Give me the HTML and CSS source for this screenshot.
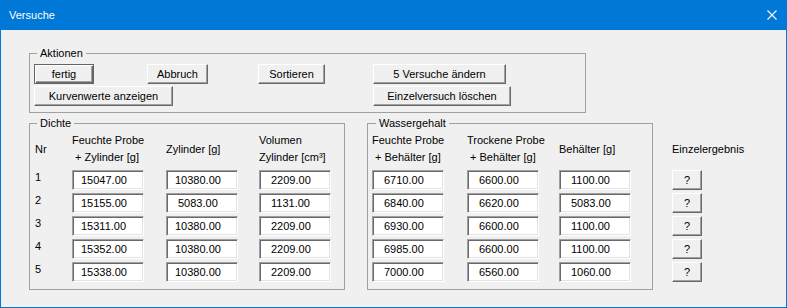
FILE: index.html
```html
<!DOCTYPE html>
<html lang="de">
<head>
<meta charset="utf-8">
<title>Versuche</title>
<link rel="stylesheet" href="styles.css">
</head>
<body>
<div class="window">
  <div class="titlebar">
    <span class="title">Versuche</span>
    <svg class="close" width="10" height="10" viewBox="0 0 10 10"><path d="M0.5 0.5 L9.5 9.5 M9.5 0.5 L0.5 9.5" stroke="#fff" stroke-width="1.1" fill="none"/></svg>
  </div>
  <div class="client">
    <fieldset class="group aktionen">
      <legend>Aktionen</legend>
      <div class="act-grid">
        <button class="btn default w-fertig">fertig</button>
        <button class="btn w-abbruch">Abbruch</button>
        <button class="btn w-sort">Sortieren</button>
        <button class="btn w-aendern">5 Versuche ändern</button>
        <button class="btn w-kurven span2">Kurvenwerte anzeigen</button>
        <button class="btn w-loeschen col4">Einzelversuch löschen</button>
      </div>
    </fieldset>
    <div class="lower">
      <fieldset class="group dichte">
        <legend>Dichte</legend>
        <div class="grid-d">
          <div class="hd">Nr</div>
          <div class="hd"><span>Feuchte Probe</span><span>&nbsp;+ Zylinder [g]</span></div>
          <div class="hd">Zylinder [g]</div>
          <div class="hd"><span>Volumen</span><span>Zylinder [cm³]</span></div>

          <div class="nr">1</div>
          <input class="fld" value="15047.00" readonly>
          <input class="fld" value="10380.00" readonly>
          <input class="fld n7" value="2209.00" readonly>

          <div class="nr">2</div>
          <input class="fld" value="15155.00" readonly>
          <input class="fld n7" value="5083.00" readonly>
          <input class="fld n7" value="1131.00" readonly>

          <div class="nr">3</div>
          <input class="fld" value="15311.00" readonly>
          <input class="fld" value="10380.00" readonly>
          <input class="fld n7" value="2209.00" readonly>

          <div class="nr">4</div>
          <input class="fld" value="15352.00" readonly>
          <input class="fld" value="10380.00" readonly>
          <input class="fld n7" value="2209.00" readonly>

          <div class="nr">5</div>
          <input class="fld" value="15338.00" readonly>
          <input class="fld" value="10380.00" readonly>
          <input class="fld n7" value="2209.00" readonly>
        </div>
      </fieldset>
      <fieldset class="group wasser">
        <legend>Wassergehalt</legend>
        <div class="grid-w">
          <div class="hd"><span>Feuchte Probe</span><span>&nbsp;+ Behälter [g]</span></div>
          <div class="hd"><span>Trockene Probe</span><span>&nbsp;+ Behälter [g]</span></div>
          <div class="hd">Behälter [g]</div>

          <input class="fld n7" value="6710.00" readonly>
          <input class="fld n7" value="6600.00" readonly>
          <input class="fld n7" value="1100.00" readonly>

          <input class="fld n7" value="6840.00" readonly>
          <input class="fld n7" value="6620.00" readonly>
          <input class="fld n7" value="5083.00" readonly>

          <input class="fld n7" value="6930.00" readonly>
          <input class="fld n7" value="6600.00" readonly>
          <input class="fld n7" value="1100.00" readonly>

          <input class="fld n7" value="6985.00" readonly>
          <input class="fld n7" value="6600.00" readonly>
          <input class="fld n7" value="1100.00" readonly>

          <input class="fld n7" value="7000.00" readonly>
          <input class="fld n7" value="6560.00" readonly>
          <input class="fld n7" value="1060.00" readonly>
        </div>
      </fieldset>
      <div class="einzel">
        <div class="hd">Einzelergebnis</div>
        <button class="btn q">?</button>
        <button class="btn q">?</button>
        <button class="btn q">?</button>
        <button class="btn q">?</button>
        <button class="btn q">?</button>
      </div>
    </div>
  </div>
</div>
</body>
</html>
```

FILE: styles.css
```css
* { box-sizing: border-box; }

html, body {
  margin: 0;
  padding: 0;
  background: #f0f0f0;
}

body {
  font-family: "Liberation Sans", Arial, sans-serif;
  font-size: 11px;
  color: #000;
}

.window {
  width: 787px;
  height: 308px;
  background: #f0f0f0;
  border-left: 1px solid #0078d7;
  border-right: 1px solid #0078d7;
  border-bottom: 1px solid #0078d7;
  display: flex;
  flex-direction: column;
}

.titlebar {
  height: 30px;
  flex: none;
  background: #0078d7;
  color: #fff;
  display: flex;
  align-items: center;
  padding-left: 8px;
  padding-right: 9px;
}

.title {
  font-size: 11px;
  line-height: 13px;
  padding-top: 1px;
}

.close {
  margin-left: auto;
  display: block;
}

.client {
  padding: 16px 0 0 28px;
}

.group {
  margin: 0;
  border: 1px solid #a0a0a0;
  min-inline-size: 0;
}

.group legend {
  padding: 0 3px;
  line-height: 15px;
}

.aktionen {
  width: 557px;
  padding: 3px 4px 6px 4px;
}

.aktionen legend { margin-left: 3px; }

.act-grid {
  display: grid;
  grid-template-columns: 113px 111px 115px auto;
  grid-template-rows: 20px 20px;
  row-gap: 2px;
  justify-items: start;
}

.btn {
  font-family: "Liberation Sans", Arial, sans-serif;
  font-size: 11px;
  color: #000;
  height: 20px;
  padding: 0;
  margin: 0;
  background: #f0f0f0;
  border-top: 1px solid #fff;
  border-left: 1px solid #fff;
  border-right: 1px solid #696969;
  border-bottom: 1px solid #696969;
  box-shadow: inset -1px -1px 0 #a0a0a0;
  border-radius: 0;
  line-height: 16px;
}

.btn.default {
  border: 1px solid #646464;
  box-shadow: inset 1px 1px 0 #fff, inset -1px -1px 0 #696969, inset -2px -2px 0 #a0a0a0;
}

.w-fertig { width: 60px; }
.w-abbruch { width: 61px; }
.w-sort { width: 67px; }
.w-aendern { width: 133px; }
.w-kurven { width: 139px; }
.w-loeschen { width: 138px; }
.span2 { grid-column: 1 / span 3; }
.col4 { grid-column: 4; }

.lower {
  display: flex;
  align-items: flex-start;
  margin-top: 3px;
}

.dichte {
  width: 316px;
  padding: 1px 5px 7px 5px;
}

.dichte legend { margin-left: 2px; }

.wasser {
  width: 286px;
  margin-left: 22px;
  padding: 1px 4px 7px 4px;
}

.wasser legend { margin-left: 4px; }

.grid-d {
  display: grid;
  grid-template-columns: 37px 94px 93px 72px;
  grid-template-rows: 35px repeat(5, 20px);
  row-gap: 3px;
}

.grid-w {
  display: grid;
  grid-template-columns: 95px 92px 72px;
  grid-template-rows: 35px repeat(5, 20px);
  row-gap: 3px;
}

.hd {
  height: 34px;
  display: flex;
  flex-direction: column;
  justify-content: center;
  line-height: 17px;
  white-space: nowrap;
}

.nr {
  line-height: 14px;
  align-self: start;
}

.fld {
  width: 72px;
  height: 20px;
  margin: 0;
  padding: 0 0 0 8px;
  font-family: "Liberation Sans", Arial, sans-serif;
  font-size: 11px;
  color: #000;
  background: #fff;
  border-top: 1px solid #a0a0a0;
  border-left: 1px solid #a0a0a0;
  border-right: 1px solid #fff;
  border-bottom: 1px solid #fff;
  box-shadow: inset 1px 1px 0 #696969, inset -1px -1px 0 #e3e3e3;
  border-radius: 0;
  outline: none;
}

.fld.n7 { padding-left: 11px; }

.einzel {
  margin-left: 19px;
  padding-top: 16px;
  display: grid;
  grid-template-rows: 35px repeat(5, 20px);
  row-gap: 3px;
  justify-items: start;
}

.btn.q { width: 30px; }
```
